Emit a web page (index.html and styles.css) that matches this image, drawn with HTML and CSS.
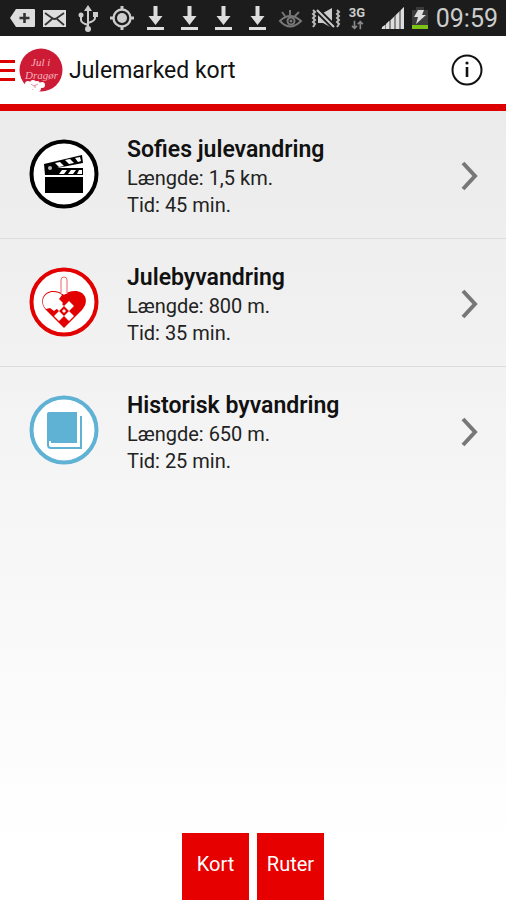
FILE: index.html
```html
<!DOCTYPE html>
<html lang="da">
<head>
    <meta charset="UTF-8">
    <title>Julemarked kort</title>
    <meta name="viewport" content="width=device-width, initial-scale=1">
    <link rel="stylesheet" href="styles.css">
</head>
<body>
<div class="app">

    <div class="statusbar">
        <div class="statusbar--icons">
            <svg viewBox="0 0 34 36"><path d="M6 18l6-9h18a1 1 0 0 1 1 1v16a1 1 0 0 1-1 1H12z" transform="translate(1 0)" fill="#ddd"/><path d="M21.500 13v10M16.500 18h10" stroke="#333" stroke-width="2.600"/></svg>
            <svg viewBox="0 0 34 36"><rect x="6" y="10" width="23" height="17" fill="#ddd"/><path d="M8 13l7 5q2.500 2 5 0l7-5M8 25l7-6M27 25l-7-6" fill="none" stroke="#333" stroke-width="1.800"/></svg>
            <svg viewBox="0 0 34 36"><g fill="none" stroke="#ccc" stroke-width="2"><path d="M17 9v20M17 25q-7-2-7-5v-5M17 23q7-2 7-5v-4"/></g><path d="M17 5l4 6h-8z" fill="#ccc"/><circle cx="17" cy="29" r="3" fill="#ccc"/><circle cx="10" cy="15" r="2.500" fill="#ccc"/><path d="M22 12h5v5h-5z" fill="#ccc"/></svg>
            <svg viewBox="0 0 34 36"><circle cx="17" cy="18" r="8.500" fill="none" stroke="#ccc" stroke-width="2.400"/><circle cx="17" cy="18" r="5" fill="#ccc"/><path d="M17 6v4M17 26v4M5 18h4M25 18h4" stroke="#ccc" stroke-width="3"/></svg>
            <svg viewBox="0 0 34 36"><path id="download" d="M14.500 6h4v10h5L16.500 25l-7-9h5zM8 27h17v3H8z" fill="#ddd"/></svg>
            <svg viewBox="0 0 34 36"><use href="#download"/></svg>
            <svg viewBox="0 0 34 36"><use href="#download"/></svg>
            <svg viewBox="0 0 34 36"><use href="#download"/></svg>
            <svg viewBox="0 0 34 36"><g fill="none" stroke="#777" stroke-width="2"><path d="M5 21q10-10 21 0q-11 11-21 0zM7 12l3 4M15 10v5M24 12l-4 4"/><circle cx="16" cy="21" r="3.500"/></g><circle cx="16" cy="21" r="1.500" fill="#777"/></svg>
            <svg viewBox="0 0 34 36"><path d="M9 13h5l9-5v20l-9-5H9z" fill="#ccc"/><path d="M8 10l18 18" stroke="#1c1c1c" stroke-width="6"/><path d="M8 10l17 17" stroke="#ccc" stroke-width="2"/><path d="M4 10l2 2-2 2 2 2-2 2 2 2-2 2 2 2-2 3M28 10l2 2-2 2 2 2-2 2 2 2-2 2 2 2-2 3" fill="none" stroke="#bbb" stroke-width="2"/></svg>
        </div>
        <div class="statusbar--network">
            <span>3G</span>
            <svg viewBox="0 0 16 12"><path d="M5 1v9M2 7l3 3 3-3M12 11V2M9 5l3-3 3 3" fill="none" stroke="#888" stroke-width="2"/></svg>
        </div>
        <svg class="statusbar--signal" viewBox="0 0 24 24"><path d="M0 23L23 1v22z" fill="#888"/><path d="M1 23v-2l3-2v4zM5 23v-5l3-3v8zM10 23V14l3-3v12zM15 23V9l3-3v17zM20 23V4l3-3v22z" fill="#ddd"/></svg>
        <svg class="statusbar--battery" viewBox="0 0 18 24"><path d="M5 1h8v3h4v15H1V4h4z" fill="#3c3c3c"/><path d="M1 19h16v4H1z" fill="#7dc218"/><path d="M7 4h6l-2 5h4L5 18l2-7H3z" fill="#ddd"/></svg>
        <time class="statusbar--time">09:59</time>
    </div>

    <header class="header">
        <button class="header--menu" aria-label="Menu">
            <span class="bars"></span>
            <svg class="logo" viewBox="0 0 44 44">
                <circle cx="22" cy="22" r="21.500" fill="#ce1b35"/>
                <text class="logo--text" x="12" y="18">Jul i</text>
                <text class="logo--text" x="6" y="31">Dragør</text>
                <g fill="#fff"><circle cx="9" cy="36" r="3"/><circle cx="14" cy="35" r="3"/><circle cx="18" cy="36" r="3"/><circle cx="23" cy="37" r="3"/><circle cx="12" cy="39" r="3"/><circle cx="18" cy="40" r="4"/></g>
                <path d="M12 36l3 2 4-2M16 37v3" fill="none" stroke="#e58c98"/>
            </svg>
        </button>
        <h1 class="header--title">Julemarked kort</h1>
        <button class="header--info" aria-label="Info">
            <svg viewBox="0 0 32 32"><circle cx="16" cy="16" r="14.500" fill="none" stroke="#111" stroke-width="2"/><circle cx="16" cy="9" r="1.600" fill="#111"/><path d="M16 13v10" stroke="#111" stroke-width="2.600"/></svg>
        </button>
    </header>

    <main class="routes">
        <a class="route" href="#sofies">
            <svg class="route--icon" viewBox="0 0 70 70">
                <circle cx="35" cy="35" r="32.500" fill="#fff" stroke="#000" stroke-width="4"/>
                <path d="M16 38h38v16H16z"/>
                <path d="M15 25l38-9 1 8-26 5h26v7H16z"/>
                <path d="M26 24l5-1 4 4-5 1zM36 21l5-1 4 4-5 1zM46 19l5-1 1 4-3 1zM33 31h5l-3 4h-5zM42 31h5l-3 4h-5zM50 31h3v4h-5z" fill="#fff"/>
                <circle cx="21" cy="29" r="2" fill="#bbb"/>
            </svg>
            <div class="route--text">
                <h2>Sofies julevandring</h2>
                <p>Længde: 1,5 km.</p>
                <p>Tid: 45 min.</p>
            </div>
            <svg class="route--arrow" viewBox="0 0 18 30"><path d="M2 2l12 13L2 28"/></svg>
        </a>
        <a class="route" href="#jul">
            <svg class="route--icon" viewBox="0 0 70 70">
                <circle cx="35" cy="35" r="32.500" fill="#fff" stroke="#e30000" stroke-width="4"/>
                <path d="M35 61L17 43C9 34 15 24 24 24q7 0 11 4q4-4 11-4c10 0 15 10 7 19z" fill="#e30000"/>
                <!-- white half of the woven heart -->
                <path d="M17 42C10 34 16 25 24 25q6 0 9 3l-3 4 4 4-4 4-5 4-4-3z" fill="#fff"/>
                <path d="M30 34l5 5-5 5-5-5zM40 34l5 5-5 5-5-5zM30 44l5 5-5 5-5-5zM40 44l5 5-5 5-5-5zM35 42l2 2-2 2-2-2z" fill="#fff"/>
                <path d="M32 27V13q0-3 3-3t3 3v14" fill="#fff" stroke="#e66"/>
            </svg>
            <div class="route--text">
                <h2>Julebyvandring</h2>
                <p>Længde: 800 m.</p>
                <p>Tid: 35 min.</p>
            </div>
            <svg class="route--arrow" viewBox="0 0 18 30"><path d="M2 2l12 13L2 28"/></svg>
        </a>
        <a class="route" href="#historisk">
            <svg class="route--icon" viewBox="0 0 70 70">
                <circle cx="35" cy="35" r="32.500" fill="#fff" stroke="#5fb2d3" stroke-width="4"/>
                <path d="M20 17h28v29H18V19q0-2 2-2z" fill="#5fb2d3"/>
                <path d="M19 45v5q0 3 3 3h30V21M22 47h26" fill="none" stroke="#5fb2d3" stroke-width="2"/>
            </svg>
            <div class="route--text">
                <h2>Historisk byvandring</h2>
                <p>Længde: 650 m.</p>
                <p>Tid: 25 min.</p>
            </div>
            <svg class="route--arrow" viewBox="0 0 18 30"><path d="M2 2l12 13L2 28"/></svg>
        </a>
    </main>

    <nav class="tabs">
        <button>Kort</button>
        <button>Ruter</button>
    </nav>

</div>
</body>
</html>
```
FILE: styles.css
```css
*, *:before, *:after {
    box-sizing: border-box;
    padding: 0;
    margin: 0;
}

body {
    background: #fff;
    font-family: Roboto, "Liberation Sans", sans-serif;
    color: #111;
}

button {
    border: 0;
    background: transparent;
    font-family: inherit;
    cursor: pointer;
}

svg {
    display: block;
    flex-shrink: 0;
}

.app {
    min-height: 100vh;
    display: flex;
    flex-direction: column;
    background: linear-gradient(#ebebeb 110px, #f3f3f3 400px, #fff 850px);
}

/* Android status bar */
.statusbar {
    height: 36px;
    padding: 0 8px 0 3px;
    display: flex;
    align-items: center;
    background: #1c1c1c;
    color: #ccc;
}

.statusbar--icons {
    display: flex;
}

.statusbar--icons svg {
    width: 34px;
    height: 36px;
}

.statusbar--network {
    width: 24px;
    display: flex;
    flex-direction: column;
    align-items: center;
    margin-left: 2px;
    font-size: 13px;
    line-height: 14px;
    font-weight: bold;
}

.statusbar--network svg {
    width: 14px;
    height: 10px;
}

.statusbar--signal {
    width: 24px;
    height: 24px;
    margin-left: 12px;
}

.statusbar--battery {
    width: 18px;
    height: 24px;
    margin-left: 6px;
}

.statusbar--time {
    margin-left: auto;
    font-size: 25px;
}

.header {
    height: 75px;
    display: flex;
    align-items: center;
    background: #fff;
    border-bottom: 7px solid #dc0000;
}

.header--menu {
    display: flex;
    align-items: center;
    gap: 4px;
}

.bars {
    width: 15px;
    height: 21px;
    border-top: 3px solid #dc0000;
    border-bottom: 3px solid #dc0000;
    background: linear-gradient(#dc0000, #dc0000) center / 100% 3px no-repeat;
}

.logo {
    width: 44px;
    height: 44px;
}

.logo--text {
    font: italic 11px "Liberation Serif", serif;
    fill: #f3b3bc;
}

.header--title {
    flex: 1;
    margin-left: 6px;
    font-size: 23px;
    font-weight: normal;
}

.header--info {
    margin-right: 23px;
}

.header--info svg {
    width: 32px;
    height: 32px;
}

.routes {
    flex: 1;
}

.route {
    display: flex;
    align-items: flex-start;
    padding: 24px 27px 19px 29px;
    color: #222;
    text-decoration: none;
    border-bottom: 1px solid #dcdcdc;
}

.route:last-child {
    border-bottom: 0;
}

.route--icon {
    width: 70px;
    height: 70px;
    margin-top: 4px;
}

.route--text {
    flex: 1;
    margin-left: 28px;
}

.route--text h2 {
    font-size: 23px;
    line-height: 30px;
    font-weight: 600;
    color: #111;
}

.route--text p {
    font-size: 20px;
    line-height: 27px;
}

.route--arrow {
    width: 18px;
    height: 30px;
    margin-top: 26px;
    fill: none;
    stroke: #777;
    stroke-width: 4px;
}

.tabs {
    display: flex;
    justify-content: center;
    gap: 8px;
}

.tabs button {
    width: 67px;
    height: 67px;
    padding-bottom: 6px;
    background: #e60000;
    color: #fff;
    font-size: 20px;
}
```
